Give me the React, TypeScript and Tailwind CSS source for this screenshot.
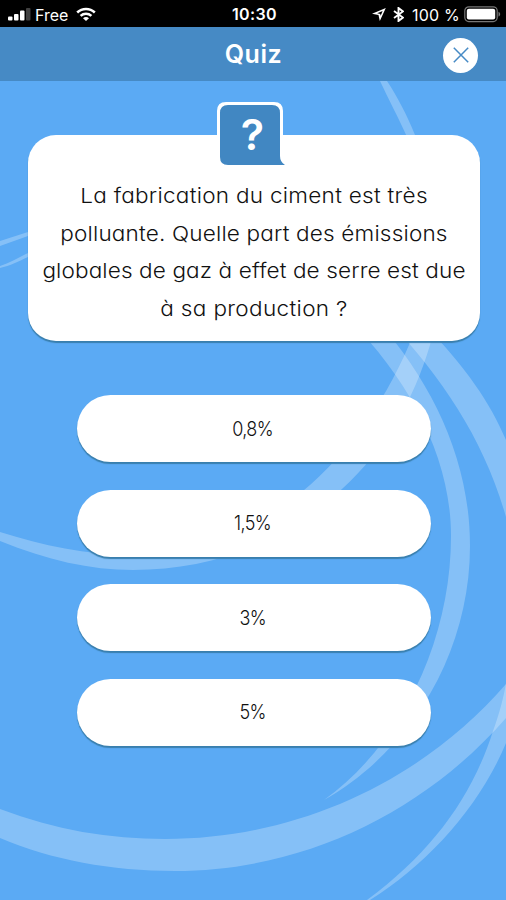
import React from "react";

const questionLines = [
  { text: "La fabrication du ciment est très", style: "tracking-[0.240px]" },
  { text: "polluante. Quelle part des émissions", style: "tracking-[0.150px]" },
  { text: "globales de gaz à effet de serre est due", style: "tracking-[0.1px]" },
  { text: "à sa production ?", style: "tracking-[0.3px]" },
];

const answers = ["0,8%", "1,5%", "3%", "5%"];

const Background: React.FC = () => {
  return (
    <svg className="absolute inset-0 -z-10" width="506" height="900" viewBox="0 0 506 900" fill="#fff" fillOpacity="0.26">
      {/* large ring at the bottom */}
      <path d="M0 809C55 830 110 839 165 839C300 839 424 779 506 684V718C424 812 304 871 175 871C111 871 52 860 0 838Z" />
      {/* crescent in the lower right corner */}
      <path d="M506 683C504 696 499 715 493 731C472 797 432 852 367 900H370C428 864 480 806 506 743Z" />
      {/* crescent behind the answers */}
      <path d="M350 320C410 382 451 457 451 536C451 640 402 744 324 800C412 750 470 652 470 546C470 460 433 384 377 320Z" />
      <path d="M388 320C444 380 484 440 506 517V440C490 402 466 368 425 325Z" />
      {/* long arc from the header down to the left edge */}
      <path d="M380 81C388 98 399 119 407 137C440 210 440 280 409 345C382 408 343 460 292 500C200 573 95 562 0 532V541C47 560 90 570 133 570C210 570 282 545 342 489C386 449 414 399 430 345C450 270 438 195 415 135C407 115 397 96 387 81Z" />
      <path d="M0 241L28 232V236L0 246Z" />
      <path d="M0 266C10 263 19 257 28 253V257C19 261 10 266 0 268Z" />
    </svg>
  );
};

const StatusBar: React.FC = () => {
  return (
    <div className="flex h-[27px] items-center justify-between bg-black pl-2 pr-[5px] text-white font-['Inter','Liberation_Sans',sans-serif]">
      <div className="flex w-[180px] items-center pt-[2px]">
        <svg width="24" height="14" viewBox="0 0 24 14" fill="#fff">
          <rect x="0" y="8.5" width="4.5" height="4" rx="1" />
          <rect x="6" y="6" width="4.5" height="6.500" rx="1" />
          <rect x="12" y="2.500" width="4.500" height="10" rx="1" />
          <rect x="18" y="0" width="4.500" height="12.500" rx="1" fillOpacity="0.25" />
        </svg>
        <span className="ml-[3px] text-[16px] leading-4">Free</span>
        <svg className="ml-[8px]" width="20" height="15" viewBox="0 0 20 15" fill="none" stroke="#fff" strokeWidth="2.6">
          <path d="M1.200 5.500C6.200 0.800 13.800 0.800 18.800 5.500" />
          <path d="M4.600 8.900C7.700 6.100 12.300 6.100 15.400 8.900" />
          <path d="M10 14L7 11.200C8.700 9.700 11.300 9.700 13 11.200Z" fill="#fff" stroke="none" />
        </svg>
      </div>
      <span className="pt-[1px] text-[16px] font-semibold leading-4 tracking-[0.4px]">10:30</span>
      <div className="flex w-[180px] items-center justify-end pt-[2px]">
        <svg width="14" height="13" viewBox="0 0 14 13" fill="#fff">
          <path fillRule="evenodd" d="M13.800 0L0 5.800L6.500 7L7.800 13ZM10.600 2.900L5.200 5.300L8.200 5.900L8.700 7.800Z" />
        </svg>
        <svg className="ml-[7px]" width="11" height="15" viewBox="0 0 11 15" fill="none" stroke="#fff" strokeWidth="1.900">
          <path d="M1 4L10 10.600L5.500 14V1L10 4.400L1 11" />
        </svg>
        <span className="ml-[8px] whitespace-nowrap text-[16px] leading-4 tracking-[0.2px]">100 %</span>
        <svg className="ml-[4px]" width="37" height="17" viewBox="0 0 37 17">
          <rect x="0.800" y="0.800" width="32.400" height="14.800" rx="4" fill="none" stroke="#777" strokeWidth="1.200" />
          <rect x="2.800" y="2.800" width="28.400" height="10.800" rx="2" fill="#fff" />
          <path d="M34.500 5.800C36.700 6.600 36.700 9.800 34.500 10.600Z" fill="#777" />
        </svg>
      </div>
    </div>
  );
};

const Header: React.FC = () => {
  return (
    <header className="grid h-[54px] grid-cols-[1fr_auto_1fr] items-center bg-[#468ac5] pr-[28px]">
      <h1 className="col-start-2 ml-[29px] text-[25px] font-semibold leading-none tracking-[0.6px] text-white">Quiz</h1>
      <button aria-label="Fermer" className="mt-[2px] flex size-[35px] items-center justify-center justify-self-end rounded-full bg-white">
        <svg width="16" height="16" viewBox="0 0 16 16" stroke="#468ac5" strokeWidth="1.500">
          <path d="M0.800 0.800L15.200 15.200M15.200 0.800L0.800 15.200" />
        </svg>
      </button>
    </header>
  );
};

const App: React.FC = () => {
  return (
    <div className="relative isolate h-[900px] w-[506px] overflow-hidden bg-[#5baaf4] font-['Inter','Liberation_Sans',sans-serif] [font-feature-settings:'cv11']">
      <Background />
      <StatusBar />
      <Header />
      <main className="flex flex-col items-center">
        <section className="relative ml-[2px] mt-[54px] h-[205.500px] w-[452px] rounded-[28px] bg-white pt-[42px] text-center text-[20.500px] font-[350] leading-[37.700px] text-[#111] shadow-[0_2px_1px_#397fae]">
          <svg className="absolute left-[188px] top-[-34px]" width="72" height="66" viewBox="0 0 72 66">
            <path d="M1 40V10Q1 1 10 1H58Q67 1 67 10V40Z" fill="#fff" />
            <path d="M4 12Q4 4 12 4H56Q64 4 64 12V55Q64 61 69 64H12Q4 64 4 56Z" fill="#4187c2" />
            <text x="36.500" y="49" textAnchor="middle" fill="#fff" fontSize="43" fontWeight="600">?</text>
          </svg>
          {questionLines.map((line) => (
            <p key={line.text} className={`relative -left-[0.5px] scale-x-110 whitespace-nowrap ${line.style}`}>
              {line.text}
            </p>
          ))}
        </section>
        <div className="ml-[2px] mt-[54.500px] flex flex-col gap-[27.300px]">
          {answers.map((answer) => (
            <button
              key={answer}
              className="h-[67.300px] w-[354px] rounded-full bg-white pr-[2px] text-[20px] font-[350] text-[#111] shadow-[0_2px_1px_#397fae]"
            >
              <span className="inline-block scale-x-90 tracking-[-0.7px]">{answer}</span>
            </button>
          ))}
        </div>
      </main>
    </div>
  );
};

export default App;
